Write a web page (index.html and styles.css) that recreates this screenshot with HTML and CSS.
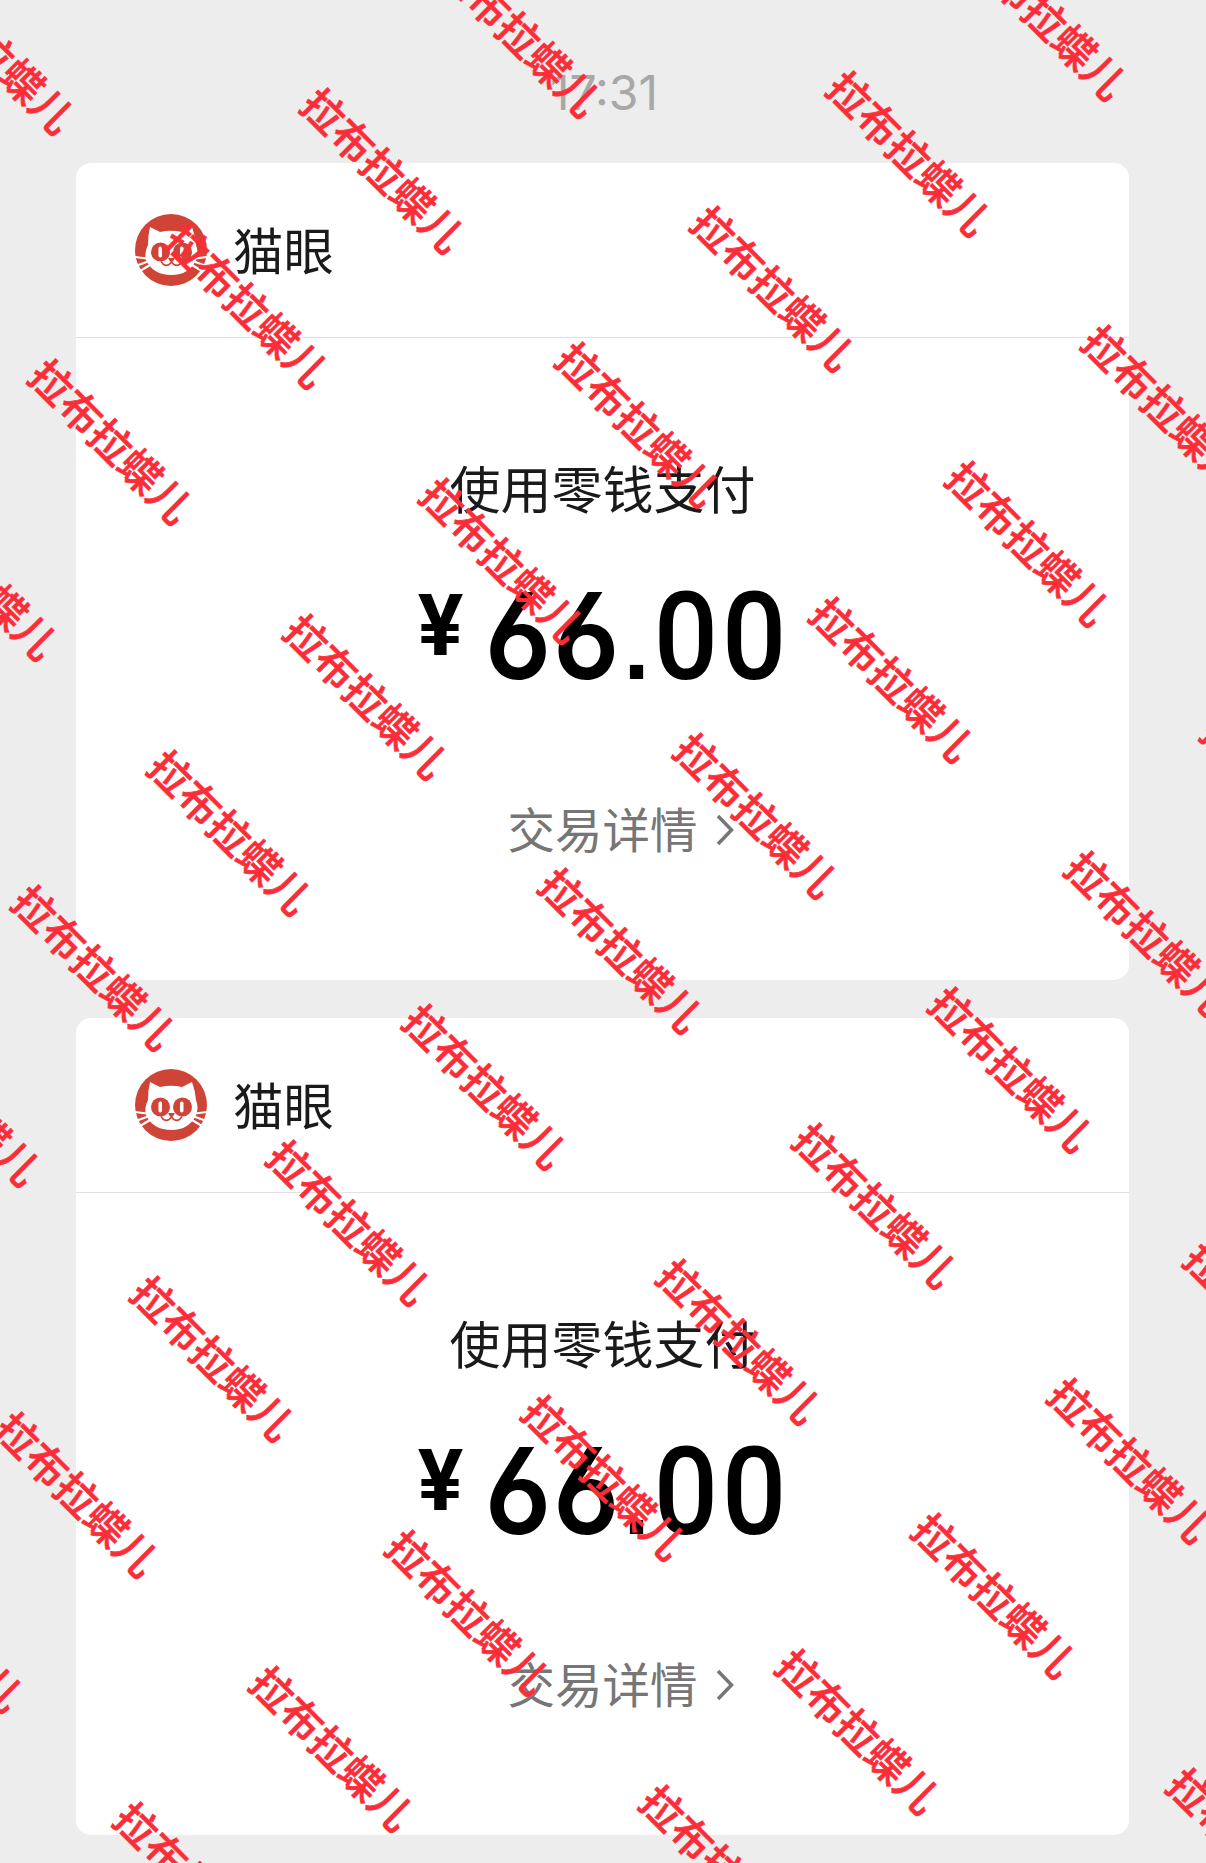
FILE: index.html
```
<!DOCTYPE html>
<html lang="zh-CN">
<head>
  <meta charset="utf-8">
  <title>支付消息</title>
  <link rel="stylesheet" href="styles.css">
</head>
<body>
  <svg width="0" height="0" class="defs">
    <symbol id="cat" viewBox="0 0 72 72">
      <circle cx="36" cy="36" r="36" fill="#d04437"/>
      <g stroke="#fff" stroke-width="2.2" fill="none">
        <path d="M0 43 L12 44.500 M2 51.500 L13 47.500 M5 57 L15 51 M72 43 L60 44.500 M70 51.500 L59 47.500 M67 57 L57 51"/>
      </g>
      <path d="M15 13 L25 18 Q36 15.500 47 18 L57 13 Q60 21 61 31 Q64 39 61 46 Q54 61 36.500 61 Q18 61 11 46 Q9 39 13 31 Q13 21 15 13 Z" fill="#fff"/>
      <circle cx="25.500" cy="38" r="9.500" fill="#d04437"/>
      <circle cx="47.500" cy="38" r="9.500" fill="#d04437"/>
      <rect x="23.500" y="32.500" width="3.500" height="11" rx="1.700" fill="#fff"/>
      <rect x="45" y="32.500" width="3.500" height="11" rx="1.700" fill="#fff"/>
      <path d="M33 44 h7 l-2 3.500 h-3 z" fill="#d04437"/>
      <path d="M36.500 46 V48 Q33 53 28.500 50.500 L26 47.500 M36.500 48 Q40 53 44.500 50.500 L47 47.500" fill="none" stroke="#d04437" stroke-width="1.600"/>
    </symbol>
  </svg>

  <div class="time">17:31</div>

  <div class="card">
    <div class="card-head">
      <svg class="logo"><use href="#cat"/></svg>
      <span class="name">猫眼</span>
    </div>
    <div class="card-body">
      <div class="method">使用零钱支付</div>
      <div class="amount"><span class="yen">¥</span><span class="six">66</span><span class="dot">.</span><span class="zero">00</span></div>
      <div class="detail">交易详情<svg class="arrow" viewBox="0 0 18 32"><path d="M2 2 L15.500 16 L2 30"/></svg></div>
    </div>
  </div>

  <div class="card">
    <div class="card-head">
      <svg class="logo"><use href="#cat"/></svg>
      <span class="name">猫眼</span>
    </div>
    <div class="card-body">
      <div class="method">使用零钱支付</div>
      <div class="amount"><span class="yen">¥</span><span class="six">66</span><span class="dot">.</span><span class="zero">00</span></div>
      <div class="detail">交易详情<svg class="arrow" viewBox="0 0 18 32"><path d="M2 2 L15.500 16 L2 30"/></svg></div>
    </div>
  </div>

  <div id="watermark" class="watermark"></div>

  <script>
    var box = document.getElementById('watermark');
    var along = 254.6;
    var across = 135.8;
    for (var i = -8; i < 10; i++) {
      for (var j = -10; j < 14; j++) {
        var x = 325 + i * along - j * across;
        var y = 79.5 + i * along + j * across;
        // skip marks that would be fully off the page
        if (x < -150 || x > 1225 || y < -150 || y > 1860) continue;
        var mark = document.createElement('span');
        mark.className = 'mark';
        mark.textContent = '拉布拉蝶儿';
        mark.style.left = x + 'px';
        mark.style.top = y + 'px';
        box.appendChild(mark);
      }
    }
  </script>
</body>
</html>
```

FILE: styles.css
```
body {
  margin: 0;
  position: relative;
  height: 1863px;
  overflow: hidden;
  background: #ededed;
  font-family: "Noto Sans CJK SC", sans-serif;
  color: #1a1a1a;
}
.defs {
  position: absolute;
}
.time {
  padding: 63px 0 0 2px;
  height: 100px;
  box-sizing: border-box;
  margin-bottom: 63px;
  line-height: 60px;
  text-align: center;
  font-family: Inter, sans-serif;
  font-size: 48px;
  color: #a8a8a8;
}
.card {
  width: 1053px;
  height: 817px;
  margin: 0 0 38px 76px;
  background: #fff;
  border-radius: 15px;
}
.card-head {
  display: flex;
  align-items: center;
  height: 174px;
  padding-left: 59px;
  border-bottom: 1px solid #e2e2e2;
}
.logo {
  width: 72px;
  height: 72px;
}
.name {
  margin-left: 26px;
  padding-bottom: 5px;
  font-size: 50.5px;
  line-height: 60px;
}
.card-body {
  display: flex;
  flex-direction: column;
  align-items: center;
  padding-top: 119px;
}
.method {
  font-size: 51px;
  line-height: 60px;
}
.amount {
  display: flex;
  height: 100px;
  margin-top: 70px;
  padding-left: 3.5px;
  font-family: Roboto, sans-serif;
  font-weight: 500;
  font-size: 123px;
  line-height: 100px;
  color: #000;
}
.amount span {
  display: flex;
  justify-content: center;
}
.yen {
  width: 44px;
  margin-right: 22.5px;
  font-size: 85px;
  font-weight: 700;
  line-height: 78px;
}
.six {
  width: 136px;
  font-family: Inter, sans-serif;
  font-size: 120px;
  font-weight: 600;
  font-feature-settings: "cv03";
  letter-spacing: 1.8px;
  line-height: 98px;
  transform: scaleX(.92);
}
.dot {
  width: 31px;
  font-family: "Liberation Sans", sans-serif;
  font-size: 94px;
  font-weight: 700;
  line-height: 120px;
}
.zero {
  width: 136px;
  padding-left: 2px;
  letter-spacing: 4.3px;
  line-height: 101px;
  transform: scaleX(.92);
}
.detail {
  display: flex;
  align-items: center;
  margin-top: 111px;
  padding-left: 36px;
  font-size: 47.5px;
  line-height: 60px;
  color: #767676;
}
.arrow {
  width: 18px;
  height: 32px;
  margin-left: 18px;
  margin-top: 3px;
}
.arrow path {
  fill: none;
  stroke: #767676;
  stroke-width: 3.5;
}
.watermark {
  position: absolute;
  top: 0;
  left: 0;
  width: 1206px;
  height: 1863px;
  overflow: hidden;
}
.mark {
  position: absolute;
  font-size: 42px;
  line-height: 42px;
  font-weight: 500;
  -webkit-text-stroke: .6px #fb2d38;
  white-space: nowrap;
  color: #fb2d38;
  transform: rotate(45deg);
  transform-origin: 0 0;
}
```
